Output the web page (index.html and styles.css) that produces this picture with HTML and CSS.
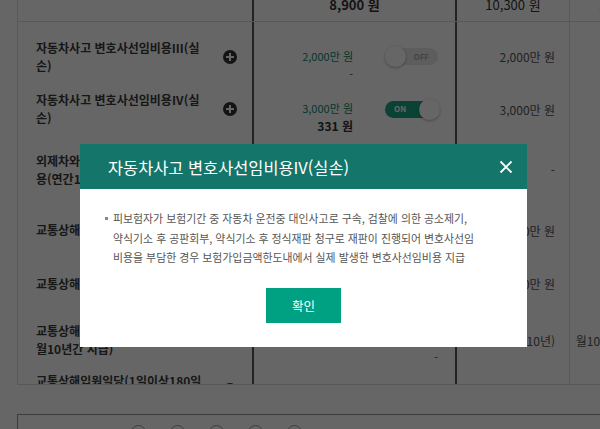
FILE: index.html
```html
<!DOCTYPE html>
<html lang="ko">
<head>
    <meta charset="UTF-8">
    <meta name="viewport" content="width=device-width, initial-scale=1.0">
    <title>자동차사고 변호사선임비용</title>
    <link rel="stylesheet" href="styles.css">
</head>
<body>
    <div class="page">
        <div class="plan-table">
            <div class="tbl-row tbl-head">
                <div class="cell cell-name"></div>
                <div class="cell cell-plan"><strong>8,900 원</strong></div>
                <div class="cell cell-other">10,300 원</div>
                <div class="cell cell-last">12,500 원</div>
            </div>
            <div class="tbl-body">
                <div class="tbl-row">
                    <div class="cell cell-name">
                        <span class="label">자동차사고 변호사선임비용Ⅲ(실손)</span>
                        <span class="plus"></span>
                    </div>
                    <div class="cell cell-plan">
                        <div class="amount">
                            <span class="money">2,000만 원</span>
                            <span class="premium">-</span>
                        </div>
                        <span class="toggle"><span class="toggle-text">OFF</span><span class="knob"></span></span>
                    </div>
                    <div class="cell cell-other">2,000만 원</div>
                    <div class="cell cell-last">2,000만 원</div>
                </div>
                <div class="tbl-row">
                    <div class="cell cell-name">
                        <span class="label">자동차사고 변호사선임비용Ⅳ(실손)</span>
                        <span class="plus"></span>
                    </div>
                    <div class="cell cell-plan">
                        <div class="amount">
                            <span class="money">3,000만 원</span>
                            <span class="premium premium-on">331 원</span>
                        </div>
                        <span class="toggle on"><span class="toggle-text">ON</span><span class="knob"></span></span>
                    </div>
                    <div class="cell cell-other">3,000만 원</div>
                    <div class="cell cell-last">3,000만 원</div>
                </div>
                <div class="tbl-row">
                    <div class="cell cell-name">
                        <span class="label">외제차와 충돌시 대물배상지원비<br>용(연간1회)</span>
                        <span class="plus"></span>
                    </div>
                    <div class="cell cell-plan">
                        <div class="amount">
                            <span class="money">-</span>
                            <span class="premium">-</span>
                        </div>
                    </div>
                    <div class="cell cell-other">-</div>
                    <div class="cell cell-last">-</div>
                </div>
                <div class="tbl-row">
                    <div class="cell cell-name">
                        <span class="label">교통상해사망</span>
                        <span class="plus"></span>
                    </div>
                    <div class="cell cell-plan">
                        <div class="amount">
                            <span class="money">1,000만 원</span>
                            <span class="premium">-</span>
                        </div>
                    </div>
                    <div class="cell cell-other">1,000만 원</div>
                    <div class="cell cell-last">2,000만 원</div>
                </div>
                <div class="tbl-row">
                    <div class="cell cell-name">
                        <span class="label">교통상해후유장해(3~100%)</span>
                        <span class="plus"></span>
                    </div>
                    <div class="cell cell-plan">
                        <div class="amount">
                            <span class="money">1,000만 원</span>
                            <span class="premium">-</span>
                        </div>
                    </div>
                    <div class="cell cell-other">1,000만 원</div>
                    <div class="cell cell-last">2,000만 원</div>
                </div>
                <div class="tbl-row">
                    <div class="cell cell-name">
                        <span class="label">교통상해 고도후유장해연금(매<br>월10년간 지급)</span>
                        <span class="plus"></span>
                    </div>
                    <div class="cell cell-plan">
                        <div class="amount">
                            <span class="money">-</span>
                            <span class="premium">-</span>
                        </div>
                    </div>
                    <div class="cell cell-other">월50만 원(10년)</div>
                    <div class="cell cell-last">월100만 원 (10년)</div>
                </div>
                <div class="tbl-row">
                    <div class="cell cell-name">
                        <span class="label">교통상해입원일당(1일이상180일<br>한도)</span>
                        <span class="plus"></span>
                    </div>
                    <div class="cell cell-plan">
                        <div class="amount">
                            <span class="money">-</span>
                            <span class="premium">-</span>
                        </div>
                    </div>
                    <div class="cell cell-other">-</div>
                    <div class="cell cell-last">-</div>
                </div>
            </div>
        </div>
        <div class="sub-box">
            <span class="dot"></span>
            <span class="dot"></span>
            <span class="dot"></span>
            <span class="dot"></span>
            <span class="dot"></span>
        </div>
    </div>

    <div class="dim"></div>

    <div class="modal">
        <div class="modal-head">
            <h2 class="modal-title">자동차사고 변호사선임비용IV(실손)</h2>
            <button class="modal-close" type="button">
                <svg width="14" height="14" viewBox="0 0 14 14">
                    <path d="M1.5 1.5 L12.5 12.5 M12.5 1.5 L1.5 12.5" stroke="#fff" stroke-width="1.8" fill="none"/>
                </svg>
            </button>
        </div>
        <div class="modal-body">
            <p class="desc">피보험자가 보험기간 중 자동차 운전중 대인사고로 구속, 검찰에 의한 공소제기,<br>약식기소 후 공판회부, 약식기소 후 정식재판 청구로 재판이 진행되어 변호사선임<br>비용을 부담한 경우 보험가입금액한도내에서 실제 발생한 변호사선임비용 지급</p>
            <button class="confirm-btn" type="button">확인</button>
        </div>
    </div>
</body>
</html>
```

FILE: styles.css
```css
* {
    box-sizing: border-box;
}
body {
    margin: 0;
    width: 600px;
    height: 429px;
    overflow: hidden;
    font-family: "Noto Sans CJK KR", "Noto Sans", sans-serif;
    background-color: #ffffff;
    color: #333;
}
.page {
    padding-left: 17px;
}
.plan-table {
    height: 385px;
    overflow: hidden;
    border-left: 1px solid #dcdcdc;
    border-bottom: 1px solid #dcdcdc;
}
.tbl-row {
    display: grid;
    grid-template-columns: 236px 203px 113px 113px;
}
.cell {
    display: flex;
    align-items: center;
    border-right: 1px solid #dcdcdc;
}
.cell-name {
    justify-content: space-between;
    padding: 0 15px 0 18px;
    border-right: 2px solid #555;
}
.cell-plan {
    justify-content: flex-end;
    gap: 32px;
    padding-right: 17px;
    border-right: 2px solid #555;
}
.cell-other,
.cell-last {
    justify-content: flex-end;
    padding-right: 14px;
    font-size: 12px;
    color: #555;
    white-space: nowrap;
}
.tbl-head {
    height: 22px;
    border-bottom: 1px solid #dcdcdc;
}
.tbl-head .cell {
    align-items: flex-start;
    justify-content: center;
    padding: 0;
    font-size: 13px;
    line-height: 9px;
    color: #333;
}
.tbl-head .cell-last {
    border-right: none;
}

.tbl-body .tbl-row:nth-child(1) { height: 61px; }
.tbl-body .tbl-row:nth-child(1) .cell { padding-top: 8px; }
.tbl-body .tbl-row:nth-child(2) { height: 52px; }
.tbl-body .tbl-row:nth-child(3) { height: 69px; }
.tbl-body .tbl-row:nth-child(4) { height: 49px; }
.tbl-body .tbl-row:nth-child(5) { height: 61px; }
.tbl-body .tbl-row:nth-child(6) { height: 46px; }
.tbl-body .tbl-row:nth-child(7) { height: 59px; }

.label {
    width: 168px;
    font-size: 12px;
    font-weight: 700;
    line-height: 18px;
    color: #3a3a3a;
}
.plus {
    position: relative;
    width: 14px;
    height: 14px;
    flex-shrink: 0;
    border-radius: 50%;
    background-color: #333;
}
.plus::before,
.plus::after {
    content: "";
    position: absolute;
    left: 3px;
    top: 6px;
    width: 8px;
    height: 2px;
    background-color: #fff;
}
.plus::after {
    transform: rotate(90deg);
}
.amount {
    display: flex;
    flex-direction: column;
    align-items: flex-end;
    padding-top: 16px;
    font-size: 11px;
    line-height: 18px;
    white-space: nowrap;
}
.money {
    color: #0b8a70;
}
.premium {
    color: #555;
}
.premium-on {
    font-size: 12px;
    font-weight: 700;
    color: #333;
}
.toggle {
    position: relative;
    display: flex;
    align-items: center;
    width: 53px;
    height: 17px;
    border-radius: 9px;
    background-color: #e9e9e9;
    justify-content: flex-end;
    padding: 0 9px;
}
.toggle-text {
    font-size: 8px;
    font-weight: 700;
    color: #aaa;
    line-height: 1;
}
.knob {
    position: absolute;
    left: 0;
    top: -2px;
    width: 21px;
    height: 21px;
    border-radius: 50%;
    background-color: #fff;
    box-shadow: 0 1px 3px rgba(0, 0, 0, 0.3);
}
.toggle.on {
    justify-content: flex-start;
    background-color: #1aa588;
}
.toggle.on .toggle-text {
    color: #fff;
}
.toggle.on .knob {
    left: auto;
    right: -2px;
}
.sub-box {
    display: flex;
    gap: 24px;
    margin-top: 29px;
    height: 40px;
    padding: 10px 0 0 113px;
    border-top: 1px solid #999;
    border-left: 1px solid #999;
}
.dot {
    width: 15px;
    height: 15px;
    border: 1px solid #999;
    border-radius: 50%;
}
.dim {
    position: fixed;
    top: 0;
    left: 0;
    right: 0;
    bottom: 0;
    background-color: rgba(0, 0, 0, 0.6);
}
.modal {
    position: fixed;
    left: 80px;
    top: 144px;
    width: 447px;
    background-color: #fff;
}
.modal-head {
    display: flex;
    align-items: center;
    justify-content: space-between;
    height: 45px;
    padding: 0 14px 0 28px;
    background-color: #14756a;
}
.modal-title {
    margin: 0;
    font-size: 16.4px;
    font-weight: 400;
    color: #fff;
}
.modal-close {
    display: flex;
    padding: 0;
    border: none;
    background: none;
    cursor: pointer;
}
.modal-body {
    padding: 20px 20px 24px 33px;
}
.desc {
    position: relative;
    margin: 0;
    font-size: 10.9px;
    line-height: 19.5px;
    color: #555;
    white-space: nowrap;
}
.desc::before {
    content: "";
    position: absolute;
    left: -8px;
    top: 8px;
    width: 3px;
    height: 3px;
    background-color: #888;
}
.confirm-btn {
    display: block;
    width: 75px;
    height: 35px;
    margin: 20px 0 0 153px;
    border: none;
    background-color: #00a083;
    color: #fff;
    font-family: inherit;
    font-size: 12.5px;
}
```
